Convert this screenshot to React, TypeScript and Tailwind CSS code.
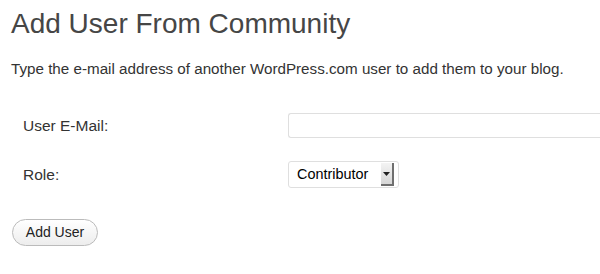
const FONT = { fontFamily: '"Liberation Sans", Arial, sans-serif' } as const;

function SelectArrow() {
  return (
    <span className="ml-auto mr-[4px] flex h-[23px] w-[13px] items-center justify-center border-r-2 border-b-2 border-[#6f6f6f] bg-gradient-to-b from-[#f4f4f4] to-[#d6d6d6]">
      <svg width="7" height="4" viewBox="0 0 7 4">
        <path d="M0 0h7L3.5 4z" fill="#222" />
      </svg>
    </span>
  );
}

export default function App() {
  return (
    <div className="h-[274px] w-[600px] overflow-hidden bg-white text-[#333]" style={FONT}>
      <h2 className="pl-[11px] pt-[7px] text-[28px] leading-[34px] text-[#464646]">Add User From Community</h2>
      <p className="mt-[19px] pl-[11px] text-[15.2px] leading-[18px]">
        Type the e-mail address of another WordPress.com user to add them to your blog.
      </p>

      <div className="mt-[35px] flex flex-col gap-[23px]">
        <div className="flex items-center">
          <label className="w-[288px] pl-[23px] text-[15.5px]">User E-Mail:</label>
          <input className="h-[25px] flex-1 rounded-l-[3px] border border-r-0 border-[#dfdfdf] bg-white" />
        </div>
        <div className="flex items-center">
          <label className="w-[288px] pl-[23px] text-[15.5px]">Role:</label>
          <div className="flex h-[27px] w-[111px] items-center rounded-[3px] border border-[#dfdfdf] bg-white pl-[8px] text-[14.4px] text-black">
            Contributor
            <SelectArrow />
          </div>
        </div>
      </div>

      <button className="ml-[12px] mt-[31px] h-[27px] w-[86px] rounded-full border border-[#bbb] bg-gradient-to-b from-white to-[#ededed] text-[14px] text-[#222]">
        Add User
      </button>
    </div>
  );
}
